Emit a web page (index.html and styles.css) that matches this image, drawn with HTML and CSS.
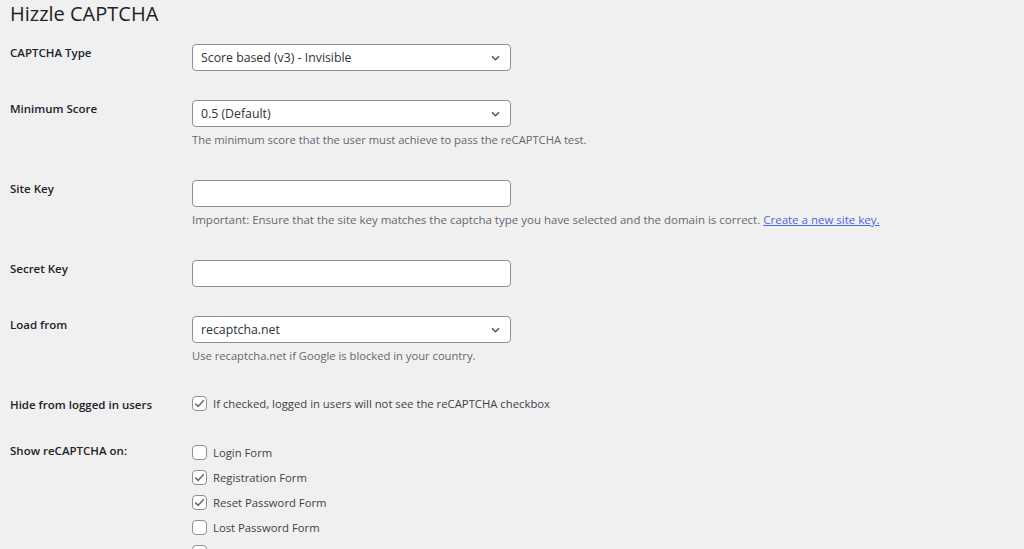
FILE: index.html
```html
<!DOCTYPE html>
<html lang="en">
<head>
<meta charset="utf-8">
<title>Hizzle CAPTCHA</title>
<link rel="stylesheet" href="styles.css">
</head>
<body>
<div class="wrap">
  <h1 class="title">Hizzle CAPTCHA</h1>
  <div class="form">
    <div class="row">
      <div class="label">CAPTCHA Type</div>
      <div class="field">
        <div class="select"><span>Score based (v3) - Invisible</span><svg class="chev" width="9" height="6" viewBox="0 0 9 6"><path d="M1 1.2 L4.5 4.7 L8 1.2" fill="none" stroke="#50575e" stroke-width="1.6"/></svg></div>
      </div>
    </div>
    <div class="row">
      <div class="label">Minimum Score</div>
      <div class="field">
        <div class="select"><span>0.5 (Default)</span><svg class="chev" width="9" height="6" viewBox="0 0 9 6"><path d="M1 1.2 L4.5 4.7 L8 1.2" fill="none" stroke="#50575e" stroke-width="1.6"/></svg></div>
        <p class="desc">The minimum score that the user must achieve to pass the reCAPTCHA test.</p>
      </div>
    </div>
    <div class="row">
      <div class="label">Site Key</div>
      <div class="field">
        <div class="input"></div>
        <p class="desc desc-wide">Important: Ensure that the site key matches the captcha type you have selected and the domain is correct. <a href="#" class="link">Create a new site key.</a></p>
      </div>
    </div>
    <div class="row">
      <div class="label">Secret Key</div>
      <div class="field">
        <div class="input"></div>
      </div>
    </div>
    <div class="row">
      <div class="label">Load from</div>
      <div class="field">
        <div class="select"><span>recaptcha.net</span><svg class="chev" width="9" height="6" viewBox="0 0 9 6"><path d="M1 1.2 L4.5 4.7 L8 1.2" fill="none" stroke="#50575e" stroke-width="1.6"/></svg></div>
        <p class="desc">Use recaptcha.net if Google is blocked in your country.</p>
      </div>
    </div>
    <div class="row">
      <div class="label">Hide from logged in users</div>
      <div class="field">
        <label class="check"><span class="box"><svg width="11" height="9" viewBox="0 0 11 9"><path d="M1.3 4.6 L4.2 7.4 L9.8 1.3" fill="none" stroke="#6b7075" stroke-width="1.6"/></svg></span>If checked, logged in users will not see the reCAPTCHA checkbox</label>
      </div>
    </div>
    <div class="row">
      <div class="label">Show reCAPTCHA on:</div>
      <div class="field list">
        <label class="check"><span class="box"></span>Login Form</label>
        <label class="check"><span class="box"><svg width="11" height="9" viewBox="0 0 11 9"><path d="M1.3 4.6 L4.2 7.4 L9.8 1.3" fill="none" stroke="#6b7075" stroke-width="1.6"/></svg></span>Registration Form</label>
        <label class="check"><span class="box"><svg width="11" height="9" viewBox="0 0 11 9"><path d="M1.3 4.6 L4.2 7.4 L9.8 1.3" fill="none" stroke="#6b7075" stroke-width="1.6"/></svg></span>Reset Password Form</label>
        <label class="check"><span class="box"></span>Lost Password Form</label>
        <label class="check"><span class="box"></span></label>
      </div>
    </div>
  </div>
</div>
</body>
</html>
```
FILE: styles.css
```css
html, body {
  margin: 0;
  padding: 0;
  background: #f0f0f1;
  height: 100%;
  overflow: hidden;
}
body {
  font-family: "Open Sans", "Noto Sans", sans-serif;
  font-size: 11.5px;
  color: #1d2327;
}
.wrap {
  padding: 0 10px;
}
.title {
  margin: 0;
  height: 30px;
  font-size: 20px;
  font-weight: 400;
  line-height: 28px;
  color: #1d2327;
}
.row {
  display: grid;
  grid-template-columns: 182px 319px;
  padding: 14px 0 15px;
}
.label {
  font-weight: 600;
  line-height: 17px;
  color: #1d2327;
}
.select, .input {
  box-sizing: border-box;
  height: 27px;
  width: 319px;
  background: #fff;
  border: 1px solid #8c8f94;
  border-radius: 4px;
}
.select {
  display: flex;
  align-items: center;
  justify-content: space-between;
  padding: 0 10px 0 8px;
  font-size: 12.3px;
  color: #2c3338;
}
.chev {
  display: block;
}
.desc {
  margin: 3px 0 2px;
  font-size: 11.2px;
  line-height: 19px;
  color: #646970;
  white-space: nowrap;
}
.desc-wide {
  font-size: 11.5px;
}
.link {
  color: #4c66e0;
  text-decoration: underline;
}
.check {
  display: flex;
  align-items: center;
  gap: 6px;
  height: 15px;
  font-size: 11.3px;
  color: #3c434a;
  white-space: nowrap;
}
.box {
  box-sizing: border-box;
  width: 15px;
  height: 15px;
  flex: none;
  background: #fff;
  border: 1px solid #8c8f94;
  border-radius: 4px;
  display: flex;
  align-items: center;
  justify-content: center;
}
.list {
  display: flex;
  flex-direction: column;
  gap: 10px;
  padding-top: 3px;
}
```
